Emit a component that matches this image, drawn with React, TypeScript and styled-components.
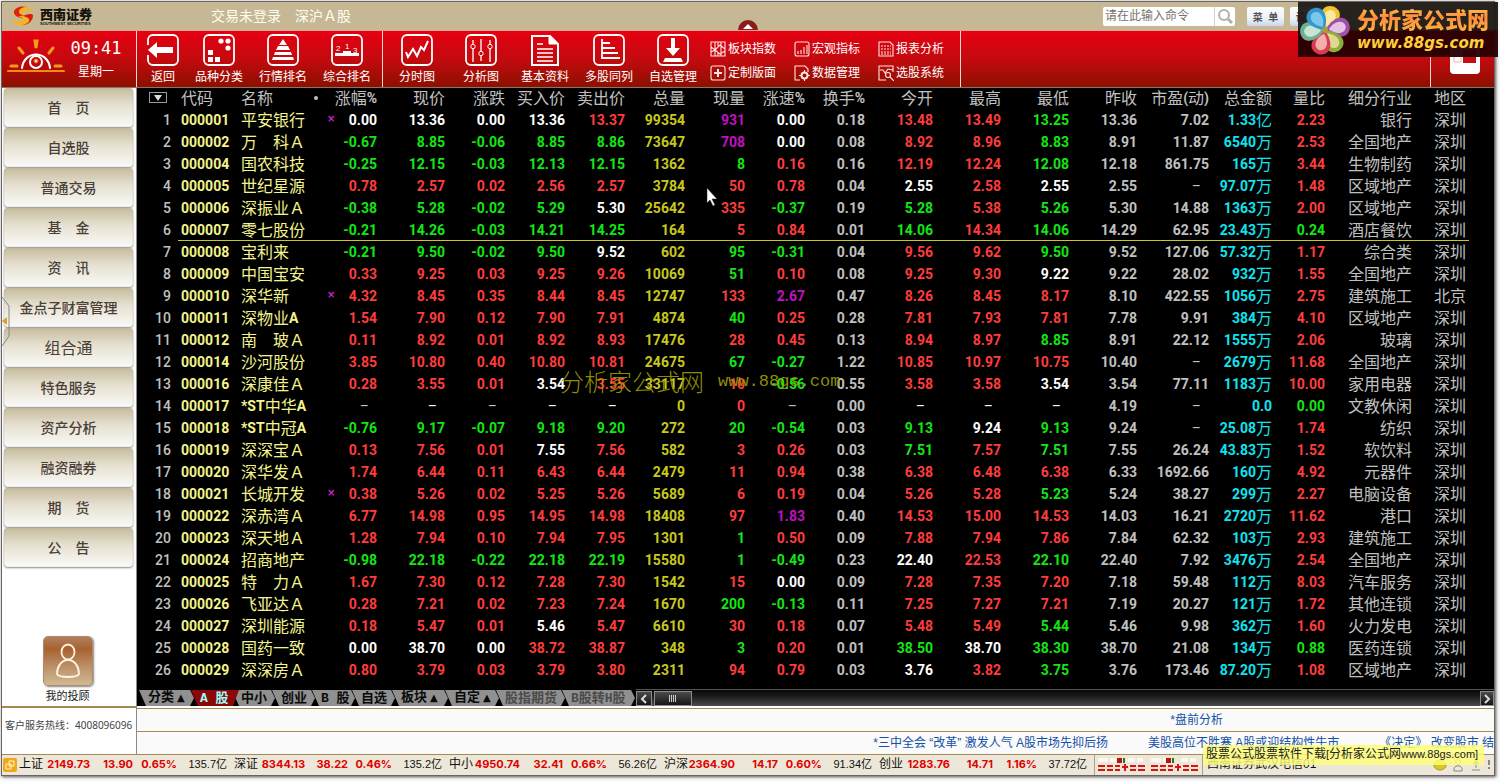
import React from 'react';
import styled, { createGlobalStyle, css } from 'styled-components';

const CJK = '"Noto Sans CJK SC"';
const GOLD = '#a58a50';

const RED = '#ff3c3c';
const GREEN = '#14e614';
const WHITE = '#ffffff';
const GRAY = '#c0c0c0';
const YELLOW = '#c8c81e';
const PURPLE = '#c010c0';
const CYAN = '#10e4f0';
const CREAM = '#f4f48c';

const GlobalStyle = createGlobalStyle`
  * { box-sizing: border-box; }
  body {
    margin: 0;
    background: #fbfbfb;
    font-family: 'Liberation Sans', ${CJK}, sans-serif;
    font-size: 12px;
  }
  button, input { font: inherit; }
  button { border: 0; padding: 0; background: none; cursor: pointer; }
`;

const Page = styled.div`
  position: relative;
  padding: 1px 5px 6px 1px;
`;

const Frame = styled.div`
  border: 1px solid #6b6460;
  box-shadow: 1px 1px 3px #555;
  background: #fff;
`;

/* ---------- title bar ---------- */

const TitleBar = styled.header`
  position: relative;
  display: flex;
  align-items: center;
  height: 28px;
  padding: 0 167px 0 10px;
  background: #c6b894;
`;

const Brand = styled.div`
  display: flex;
  align-items: center;
  gap: 6px;
  width: 199px;
`;

const BrandText = styled.div`
  display: flex;
  flex-direction: column;
  font: 900 13px/14px ${CJK}, sans-serif;
  color: #16120c;
`;

const BrandLatin = styled.span`
  font: bold 4px/5px 'Liberation Sans', sans-serif;
  white-space: nowrap;
`;

const Caption = styled.div`
  display: flex;
  gap: 14px;
  font-size: 14px;
  line-height: 20px;
  color: #fffdf0;
`;

const TitleTools = styled.div`
  display: flex;
  margin-left: auto;
  gap: 6px;
`;

const SearchBox = styled.form`
  display: flex;
  width: 132px;
  height: 19px;
  margin-right: 6px;
  background: #fff;
  border-radius: 2px;
`;

const SearchInput = styled.input`
  flex: 1;
  min-width: 0;
  border: 0;
  border-right: 1px solid #d8d2c4;
  padding: 0 2px;
  background: none;
  outline: none;
  font-size: 12px;
  &::placeholder { color: #77726a; opacity: 1; }
`;

const SearchButton = styled.button`
  display: flex;
  align-items: center;
  justify-content: center;
  width: 20px;
`;

const SmallButton = styled.button`
  width: 37px;
  height: 19px;
  border-radius: 2px;
  background: linear-gradient(#fdfdfd, #eef2f8 60%, #c9d6ea);
  color: #555;
  font-size: 10px;
  font-weight: bold;
  white-space: pre;
`;

const Collapse = styled.button`
  position: absolute;
  left: 50%;
  bottom: 0;
  height: 10px;
  line-height: 0;
  transform: translateX(-50%);
`;

/* ---------- ribbon ---------- */

const Ribbon = styled.nav`
  display: flex;
  height: 58px;
  border-top: 1px solid #e8a090;
  border-bottom: 1px solid #8c7468;
  background: linear-gradient(#e60012, #c40a0e 50%, #8c1000);
  color: #fff;
`;

const Clock = styled.div`
  display: flex;
  width: 135px;
  padding: 7px 0 0 5px;
  gap: 4px;
  border-right: 1px solid #f6d8d0;
`;

const ClockText = styled.div`
  display: flex;
  flex-direction: column;
  align-items: center;
  width: 54px;
  line-height: 20px;
`;

const Time = styled.time`
  font: 17px/20px 'DejaVu Sans Mono', monospace;
  padding-bottom: 4px;
`;

const ToolGroup = styled.div`
  display: flex;
  padding: 0 3px 0 2px;
  border-right: 1px solid #f6d8d0;
`;

const ToolButton = styled.button<{ $narrow?: boolean }>`
  display: flex;
  flex-direction: column;
  align-items: center;
  gap: 2px;
  width: ${(p) => (p.$narrow ? 48 : 64)}px;
  padding-top: 3px;
  color: #fff;
  font-size: 12px;
  line-height: 18px;
  white-space: nowrap;
`;

const MiniGrid = styled.div`
  display: grid;
  grid-template-columns: 84px 84px 79px;
  grid-template-rows: 24px 24px;
  margin: 6px 0 0 5px;
`;

const MiniButton = styled.button`
  display: flex;
  align-items: center;
  gap: 2px;
  color: #fff;
  font-size: 12px;
  line-height: 16px;
  white-space: nowrap;
`;

const RibbonEnd = styled.div`
  display: flex;
  align-items: center;
  justify-content: center;
  width: 64px;
  margin-left: auto;
  padding-left: 4px;
  border-left: 1px solid #f6d8d0;
`;

/* ---------- body ---------- */

const Body = styled.div`
  display: grid;
  grid-template-columns: 135px minmax(0, 1fr);
`;

const Sidebar = styled.aside`
  position: relative;
  display: flex;
  flex-direction: column;
  border-right: 1px solid #8a8a8a;
`;

const SideMenu = styled.nav`
  display: flex;
  flex-direction: column;
  gap: 1px;
  padding: 0 3px 0 2px;
`;

const SideButton = styled.button<{ $light?: boolean }>`
  height: 39px;
  padding-bottom: 2px;
  border-radius: 4px;
  background: linear-gradient(#c6bb9c, #e6e1d2 45%, #fbfaf7);
  box-shadow: inset 0 0 1px #999, 0 1px 2px #888;
  color: #4a4038;
  font-size: ${(p) => (p.$light ? 16 : 14)}px;
  font-weight: ${(p) => (p.$light ? 400 : 500)};
`;

const Handle = styled.button`
  position: absolute;
  left: 0;
  top: 208px;
  line-height: 0;
`;

const Advisor = styled.button`
  display: flex;
  flex-direction: column;
  align-items: center;
  margin-top: auto;
  padding: 0 3px 1px 0;
  gap: 2px;
  font-size: 11px;
  line-height: 17px;
  color: #222;
`;

const AdvisorFace = styled.span`
  display: flex;
  align-items: center;
  justify-content: center;
  width: 50px;
  height: 50px;
  border: 1px solid #b08a6c;
  border-radius: 5px;
  background: linear-gradient(#b08060, #a8622f 25%, #b88860 55%, #d0ba92);
  box-shadow: 1px 1px 2px #888;
`;

const Hotline = styled.p`
  height: 48px;
  margin: 0;
  padding: 8px 0 0 3px;
  border-top: 2px solid ${GOLD};
  font: 10px/18px 'Noto Sans', ${CJK}, sans-serif;
  color: #444;
  white-space: nowrap;
`;

const Content = styled.main`
  position: relative;
  min-width: 0;
`;

/* ---------- quote table ---------- */

const QuoteTable = styled.table`
  width: 100%;
  table-layout: fixed;
  border-collapse: collapse;
  background: #000;
  color: ${GRAY};
  font-family: ${CJK}, sans-serif;
  font-size: 16px;
  font-weight: 400;
  line-height: 20px;
`;

const Row = styled.tr<{ $marked?: boolean }>`
  height: 22px;
  ${(p) =>
    p.$marked &&
    css`
      td:not(:first-child):not(:last-child) {
        box-shadow: inset 0 -1px 0 #c8c81e;
      }
    `}
`;

const HeadRow = styled.tr`
  height: 21px;
  line-height: 18px;
`;

const cellBase = css<{ $align?: 'left' | 'right'; $color?: string }>`
  padding: 0;
  text-align: ${(p) => p.$align ?? 'right'};
  vertical-align: top;
  color: ${(p) => p.$color ?? GRAY};
  white-space: nowrap;
  font-weight: inherit;
  b {
    font: bold 14px/22px Roboto, sans-serif;
    vertical-align: top;
  }
`;

const Cell = styled.td`${cellBase}`;
const HeadCell = styled.th`
  ${cellBase}
  font-weight: 400;
  b { line-height: 20px; }
`;
const CodeHead = styled(HeadCell)` padding-left: 3px; `;
const NameHead = styled(HeadCell)` padding-left: 4px; `;

const IndexCell = styled(Cell)`
  padding-right: 7px;
  b { font-weight: 500; }
`;
const CodeCell = styled(Cell)` padding-left: 3px; `;
const NameCell = styled(Cell)` padding-left: 4px; `;
const RegionCell = styled(Cell)` padding-right: 3px; `;
const RegionHead = styled(HeadCell)` padding-right: 3px; `;

const Marker = styled.span`
  float: left;
  padding-left: 5px;
  font: bold 10px/20px 'DejaVu Sans', sans-serif;
  color: #d020d0;
`;

const SortDot = styled.span`
  float: right;
  width: 4px;
  height: 4px;
  margin: 8px 4px 0 0;
  border-radius: 2px;
  background: ${GRAY};
`;

const Dash = styled.span`
  padding-right: 8px;
  font: 14px/22px Roboto, sans-serif;
  vertical-align: top;
`;

const FilterButton = styled.button`
  display: block;
  width: 18px;
  height: 11px;
  margin: 4px 0 0 12px;
  border: 1px solid #999;
  line-height: 0;
`;

/* ---------- tab strip ---------- */

const Strip = styled.div`
  display: flex;
  padding-top: 8px;
  background: #000;
`;

const Tabs = styled.div`
  display: flex;
  padding: 1px 4px 0 2px;
`;

const Tab = styled.button<{ $width: number; $active?: boolean; $dim?: boolean }>`
  position: relative;
  z-index: ${(p) => (p.$active ? 1 : 0)};
  width: ${(p) => p.$width + (p.$active ? 7 : 3)}px;
  height: 16px;
  margin-right: ${(p) => (p.$active ? -7 : -3)}px;
  padding-left: 9px;
  text-align: left;
  background: ${(p) => (p.$active ? '#8c0808' : '#909090')};
  color: ${(p) => (p.$active ? '#9ff' : p.$dim ? '#4a4a4a' : '#0a0a0a')};
  clip-path: ${(p) =>
    p.$active
      ? 'polygon(0 0, 100% 0, calc(100% - 6px) 100%, 7px 100%)'
      : 'polygon(0 0, calc(100% - 4px) 0, 100% 50%, calc(100% - 4px) 100%, 7px 100%)'};
  font: bold 13px/15px 'Liberation Mono', ${CJK}, monospace;
  white-space: nowrap;
`;

const Up = styled.span`
  padding-left: 3px;
  font: 10px/16px 'DejaVu Sans', sans-serif;
  vertical-align: top;
`;

const ScrollTrack = styled.div`
  display: flex;
  flex: 1;
  gap: 2px;
  padding: 1px 0 0;
  border-top: 1px solid #555;
  background: linear-gradient(#080808, #1c1c1c 40%, #4c4c4c);
`;

const ScrollPiece = styled.button<{ $width: number; $end?: boolean }>`
  width: ${(p) => p.$width}px;
  height: 15px;
  margin-left: ${(p) => (p.$end ? 'auto' : 0)};
  border: 1px solid #8c8c8c;
  background: linear-gradient(#4a4a4a, #161616);
  line-height: 0;
`;

/* ---------- news ---------- */

const News = styled.section`
  padding-top: 2px;
`;

const NewsRow = styled.div<{ $inset: number }>`
  display: flex;
  justify-content: flex-end;
  gap: 40px;
  height: 23px;
  padding-right: ${(p) => p.$inset}px;
  border-top: 1px solid ${GOLD};
  background: #fafafa;
`;

const NewsLink = styled.a`
  color: #1450a8;
  font-size: 12px;
  line-height: 22px;
  text-decoration: none;
  white-space: nowrap;
`;

/* ---------- status bar ---------- */

const StatusBar = styled.footer`
  display: flex;
  height: 21px;
  border-top: 1px solid ${GOLD};
  background: #ece7d8;
  line-height: 18px;
  color: #111;
`;

const StatusIcon = styled.span`
  display: flex;
  align-items: center;
  width: 17px;
  padding-left: 1px;
`;

const Index = styled.div`
  display: grid;
  grid-template-columns: 24px 47px 43px 44px 50px;
  width: 215px;
  text-align: right;
  white-space: nowrap;
`;

const Figure = styled.span`
  font: bold 11px/18px Inter, sans-serif;
  color: #e00000;
`;

const Amount = styled.span`
  font-size: 11px;
`;

const Lamps = styled.div`
  width: 109px;
  padding: 2px 0 0 2px;
  border-left: 1px solid #a8a294;
  border-right: 1px solid #a8a294;
  line-height: 0;
`;

const Server = styled.div`
  display: flex;
  flex: 1;
  justify-content: space-between;
  padding-left: 4px;
  white-space: nowrap;
`;

const TrayIcons = styled.span`
  display: flex;
  align-items: center;
`;

/* ---------- overlays ---------- */

const SiteBadge = styled.div`
  position: absolute;
  top: 2px;
  right: 2px;
  display: flex;
  align-items: center;
  gap: 6px;
  width: 200px;
  height: 55px;
  padding-left: 1px;
  background: linear-gradient(rgba(30, 26, 22, 0.95) 48%, rgba(38, 0, 2, 0.95) 54%);
`;

const BadgeText = styled.div`
  font: 900 22px/27px ${CJK}, sans-serif;
  color: transparent;
  background: linear-gradient(#ffd24a, #ff8a3c 45%, #ffb43c);
  background-clip: text;
  white-space: nowrap;
`;

const BadgeUrl = styled.div`
  font: italic bold 15px/22px 'DejaVu Sans', sans-serif;
  color: #ffcf3a;
`;

const Watermark = styled.div`
  position: absolute;
  left: 423px;
  top: 276px;
  display: flex;
  gap: 14px;
  font: 300 24px/34px ${CJK}, sans-serif;
  color: rgba(160, 160, 0, 0.9);
  pointer-events: none;
  span { font: 17px/36px 'Liberation Mono', monospace; }
`;

const Pointer = styled.svg`
  position: absolute;
  left: 569px;
  top: 99px;
`;

const Banner = styled.div`
  position: absolute;
  right: 16px;
  bottom: 17px;
  width: 281px;
  height: 20px;
  padding-left: 3px;
  background: rgba(255, 255, 120, 0.82);
  color: #222;
  font-size: 12px;
  line-height: 18px;
  white-space: nowrap;
  span { font-size: 11px; }
`;

/* ---------- data ---------- */

// name, flagged, change %, price, change, bid, ask, volume, last lot (sign = side),
// speed, turnover, open, high, low, previous close, P/E, amount, ratio, industry, region
type Quote = [
  string, string, boolean, string, string, string, string, string, string, string,
  string, string, string, string, string, string, string, string, string, string, string
];

const parse = (line: string): Quote => {
  const [code, name, ...rest] = line.split(' ');
  const flagged = name.endsWith('!');
  return [code, name.replace('!', '').replace('_', '\u3000'), flagged, ...rest] as unknown as Quote;
};

const QUOTES: Quote[] = `000001 平安银行! 0.00 13.36 0.00 13.36 13.37 99354 *931 0.00 0.18 13.48 13.49 13.25 13.36 7.02 1.33亿 2.23 银行 深圳
000002 万_科Ａ -0.67 8.85 -0.06 8.85 8.86 73647 *708 0.00 0.08 8.92 8.96 8.83 8.91 11.87 6540万 2.53 全国地产 深圳
000004 国农科技 -0.25 12.15 -0.03 12.13 12.15 1362 -8 0.16 0.16 12.19 12.24 12.08 12.18 861.75 165万 3.44 生物制药 深圳
000005 世纪星源 0.78 2.57 0.02 2.56 2.57 3784 50 0.78 0.04 2.55 2.58 2.55 2.55 – 97.07万 1.48 区域地产 深圳
000006 深振业Ａ -0.38 5.28 -0.02 5.29 5.30 25642 335 -0.37 0.19 5.28 5.38 5.26 5.30 14.88 1363万 2.00 区域地产 深圳
000007 零七股份 -0.21 14.26 -0.03 14.21 14.25 164 5 0.84 0.01 14.06 14.34 14.06 14.29 62.95 23.43万 0.24 酒店餐饮 深圳
000008 宝利来 -0.21 9.50 -0.02 9.50 9.52 602 -95 -0.31 0.04 9.56 9.62 9.50 9.52 127.06 57.32万 1.17 综合类 深圳
000009 中国宝安 0.33 9.25 0.03 9.25 9.26 10069 -51 0.10 0.08 9.25 9.30 9.22 9.22 28.02 932万 1.55 全国地产 深圳
000010 深华新! 4.32 8.45 0.35 8.44 8.45 12747 133 2.67 0.47 8.26 8.45 8.17 8.10 422.55 1056万 2.75 建筑施工 北京
000011 深物业A 1.54 7.90 0.12 7.90 7.91 4874 -40 0.25 0.28 7.81 7.93 7.81 7.78 9.91 384万 4.10 区域地产 深圳
000012 南_玻Ａ 0.11 8.92 0.01 8.92 8.93 17476 28 0.45 0.13 8.94 8.97 8.85 8.91 22.12 1555万 2.06 玻璃 深圳
000014 沙河股份 3.85 10.80 0.40 10.80 10.81 24675 -67 -0.27 1.22 10.85 10.97 10.75 10.40 – 2679万 11.68 全国地产 深圳
000016 深康佳Ａ 0.28 3.55 0.01 3.54 3.55 33117 10 -0.56 0.55 3.58 3.58 3.54 3.54 77.11 1183万 10.00 家用电器 深圳
000017 *ST中华A – – – – – 0 0 – 0.00 – – – 4.19 – 0.0 0.00 文教休闲 深圳
000018 *ST中冠A -0.76 9.17 -0.07 9.18 9.20 272 -20 -0.54 0.03 9.13 9.24 9.13 9.24 – 25.08万 1.74 纺织 深圳
000019 深深宝Ａ 0.13 7.56 0.01 7.55 7.56 582 3 0.26 0.03 7.51 7.57 7.51 7.55 26.24 43.83万 1.52 软饮料 深圳
000020 深华发Ａ 1.74 6.44 0.11 6.43 6.44 2479 11 0.94 0.38 6.38 6.48 6.38 6.33 1692.66 160万 4.92 元器件 深圳
000021 长城开发! 0.38 5.26 0.02 5.25 5.26 5689 6 0.19 0.04 5.26 5.28 5.23 5.24 38.27 299万 2.27 电脑设备 深圳
000022 深赤湾Ａ 6.77 14.98 0.95 14.95 14.98 18408 97 1.83 0.40 14.53 15.00 14.53 14.03 16.21 2720万 11.62 港口 深圳
000023 深天地Ａ 1.28 7.94 0.10 7.94 7.95 1301 -1 0.50 0.09 7.88 7.94 7.86 7.84 62.32 103万 2.93 建筑施工 深圳
000024 招商地产 -0.98 22.18 -0.22 22.18 22.19 15580 -1 -0.49 0.23 22.40 22.53 22.10 22.40 7.92 3476万 2.54 全国地产 深圳
000025 特_力Ａ 1.67 7.30 0.12 7.28 7.30 1542 15 0.00 0.09 7.28 7.35 7.20 7.18 59.48 112万 8.03 汽车服务 深圳
000026 飞亚达Ａ 0.28 7.21 0.02 7.23 7.24 1670 -200 -0.13 0.11 7.25 7.27 7.21 7.19 20.27 121万 1.72 其他连锁 深圳
000027 深圳能源 0.18 5.47 0.01 5.46 5.47 6610 30 0.18 0.07 5.48 5.49 5.44 5.46 9.98 362万 1.60 火力发电 深圳
000028 国药一致 0.00 38.70 0.00 38.72 38.87 348 -3 0.20 0.01 38.50 38.70 38.30 38.70 21.08 134万 0.88 医药连锁 深圳
000029 深深房Ａ 0.80 3.79 0.03 3.79 3.80 2311 94 0.79 0.03 3.76 3.82 3.75 3.76 173.46 87.20万 1.08 区域地产 深圳`
  .split('\n')
  .map(parse);

const WIDTHS = [41, 59, 85, 55, 68, 60, 60, 60, 60, 60, 60, 60, 68, 68, 68, 68, 72, 63, 53, 87, 57];

const HEADS = [
  '涨幅%', '现价', '涨跌', '买入价', '卖出价', '总量', '现量', '涨速%', '换手%', '今开',
  '最高', '最低', '昨收', '市盈(动)', '总金额', '量比', '细分行业',
];

const sideOf = (value: number, base: number) =>
  value > base ? RED : value < base ? GREEN : WHITE;

const against = (value: string, base: string) =>
  value === '–' ? WHITE : sideOf(Number(value), Number(base));

const signed = (value: string) => (value === '–' ? GRAY : sideOf(Number(value), 0));

// Latin letters and figures are bold, Chinese characters are not.
const Mixed = ({ text }: { text: string }) => {
  if (text === '–') return <Dash>–</Dash>;
  return (
    <>
      {text.split(/([\x20-\x7e]+)/).map((part, i) =>
        i % 2 ? <b key={i}>{part}</b> : part
      )}
    </>
  );
};

const QuoteRow = ({ quote, index }: { quote: Quote; index: number }) => {
  const [code, name, flagged, pct, price, change, bid, ask, volume, lot, speed, turnover,
    open, high, low, prev, pe, amount, ratio, industry, region] = quote;
  const lotColor = lot[0] === '*' ? PURPLE : lot[0] === '-' ? GREEN : RED;
  const cells: [string, string][] = [
    [price, against(price, prev)],
    [change, signed(change)],
    [bid, against(bid, prev)],
    [ask, against(ask, prev)],
    [volume, YELLOW],
    [lot.replace(/[*-]/, ''), lotColor],
    [speed, Number(speed) > 1.5 ? PURPLE : signed(speed)],
    [turnover, GRAY],
    [open, against(open, prev)],
    [high, against(high, prev)],
    [low, against(low, prev)],
    [prev, GRAY],
    [pe, GRAY],
    [amount, CYAN],
    [ratio, Number(ratio) > 1 ? RED : GREEN],
    [industry, GRAY],
  ];
  return (
    <Row $marked={index === 5}>
      <IndexCell><b>{index + 1}</b></IndexCell>
      <CodeCell $align="left" $color={CREAM}><b>{code}</b></CodeCell>
      <NameCell $align="left" $color={CREAM}><Mixed text={name} /></NameCell>
      <Cell $color={signed(pct)}>
        {flagged && <Marker>×</Marker>}
        <Mixed text={pct} />
      </Cell>
      {cells.map(([text, color], i) => (
        <Cell key={i} $color={color}><Mixed text={text} /></Cell>
      ))}
      <RegionCell>{region}</RegionCell>
      <td />
    </Row>
  );
};

const Market = () => (
  <QuoteTable>
    <colgroup>
      {WIDTHS.map((w, i) => <col key={i} style={{ width: w }} />)}
      <col />
    </colgroup>
    <thead>
      <HeadRow>
        <HeadCell>
          <FilterButton aria-label="筛选">
            <svg width="8" height="6"><path d="M0 0h8L4 6z" fill="#ddd" /></svg>
          </FilterButton>
        </HeadCell>
        <CodeHead $align="left">代码</CodeHead>
        <NameHead $align="left">名称<SortDot /></NameHead>
        {HEADS.map((h) => <HeadCell key={h}><Mixed text={h} /></HeadCell>)}
        <RegionHead>地区</RegionHead>
        <td />
      </HeadRow>
    </thead>
    <tbody>
      {QUOTES.map((q, i) => <QuoteRow key={q[0]} quote={q} index={i} />)}
    </tbody>
  </QuoteTable>
);

const TABS: { label: string; width: number; menu?: boolean; active?: boolean; dim?: boolean }[] = [
  { label: '分类', width: 52, menu: true },
  { label: 'A 股', width: 41, active: true },
  { label: '中小', width: 40 },
  { label: '创业', width: 40 },
  { label: 'B 股', width: 40 },
  { label: '自选', width: 40 },
  { label: '板块', width: 53, menu: true },
  { label: '自定', width: 51, menu: true },
  { label: '股指期货', width: 66, dim: true },
  { label: 'B股转H股', width: 70, dim: true },
];

const SIDE = [
  '首\u3000页', '自选股', '普通交易', '基\u3000金', '资\u3000讯', '金点子财富管理',
  '组合通', '特色服务', '资产分析', '融资融券', '期\u3000货', '公\u3000告',
];

const INDICES = [
  ['上证', '2149.73', '13.90', '0.65%', '135.7亿'],
  ['深证', '8344.13', '38.22', '0.46%', '135.2亿'],
  ['中小', '4950.74', '32.41', '0.66%', '56.26亿'],
  ['沪深', '2364.90', '14.17', '0.60%', '91.34亿'],
  ['创业', '1283.76', '14.71', '1.16%', '37.72亿'],
];

/* ---------- drawings ---------- */

const Tile = ({ children }: { children: React.ReactNode }) => (
  <svg width="32" height="32" viewBox="0 0 32 32" fill="none" stroke="#fff">
    <rect x="1" y="1" width="30" height="30" rx="5" strokeWidth="1.8" />
    {children}
  </svg>
);

const toolIcons: Record<string, React.ReactNode> = {
  返回: (
    <Tile>
      <path d="M1 11v10" stroke="#cc0a10" strokeWidth="3" />
      <path d="M1 16l9-8v5h16v6H10v5z" fill="#fff" stroke="none" />
    </Tile>
  ),
  品种分类: (
    <Tile>
      <g fill="#fff" stroke="none">
        <circle cx="18" cy="7" r="2.6" /><circle cx="25" cy="7" r="2.6" /><circle cx="25" cy="14" r="2.6" />
        <path d="M5 16h5v5H5zM5 23h5v5H5zM12 23h5v5h-5z" />
      </g>
    </Tile>
  ),
  行情排名: (
    <Tile>
      <g fill="#fff" stroke="none">
        <path d="M16 5l4 6h-8zM11 12h10l2 4H9zM8 18h16l1 3H7zM6 23h20l1 3H5z" />
      </g>
    </Tile>
  ),
  综合排名: (
    <Tile>
      <path d="M4 19h8v-2h8v2h8v3H4z" fill="#fff" stroke="none" />
      <g fill="#fff" stroke="none" fontSize="8" fontFamily="Liberation Sans, sans-serif">
        <text x="5" y="17">2</text><text x="14" y="15">1</text><text x="22" y="19">3</text>
      </g>
    </Tile>
  ),
  分时图: (
    <Tile><path d="M5 18l2 5 5-8 4 7 4-9 3 3 4-9" strokeWidth="2" /></Tile>
  ),
  分析图: (
    <Tile>
      <path d="M8 6v4m0 5v13M16 5v12m0 5v5M25 6v4m0 5v13" strokeWidth="1.3" />
      <circle cx="8" cy="12.5" r="2.2" /><circle cx="16" cy="19.5" r="2.2" /><circle cx="25" cy="12.5" r="2.2" />
    </Tile>
  ),
  基本资料: (
    <svg width="32" height="32" viewBox="0 0 32 32" fill="none" stroke="#fff">
      <path d="M3 2h18l8 8v21H3z" strokeWidth="2" />
      <path d="M20 1v9h9z" fill="#fff" />
      <path d="M8 10h6M8 15h16M8 19h16M8 23h16M8 27h16" strokeWidth="1.3" />
    </svg>
  ),
  多股同列: (
    <Tile><path d="M9 5v19h18M9 9h8M9 14h13M9 19h16" strokeWidth="1.8" /></Tile>
  ),
  自选管理: (
    <Tile>
      <path d="M14 4h4v10h5l-7 8-7-8h5zM8 24h16l2 4H6z" fill="#fff" stroke="none" />
    </Tile>
  ),
};

const miniIcons: [string, React.ReactNode][] = [
  ['板块指数', <path d="M1 1h14v14H1zM5 1v14M11 1v14M1 6l4 3 5-5 5 4M1 11l4-2 5 4 5-3M8 1v4M8 11v4" />],
  ['宏观指标', <><rect x="1" y="1" width="14" height="14" rx="2" /><path d="M4 13v-3M7 13V9M10 13V6M13 13V4" /></>],
  ['报表分析', <><path d="M1 1h11l3 3v11H1z" /><path d="M3 5h10M3 8h10M3 11h10M3 13h10" strokeDasharray="2 1" /></>],
  ['定制版面', <><rect x="1" y="1" width="14" height="14" rx="2" /><path d="M8 4v8M4 8h8" strokeWidth="2" /></>],
  ['数据管理', <><path d="M6 15H1V1h10l3 3v3" /><circle cx="10.500" cy="10.500" r="3" strokeWidth="2" /><path d="M10.500 5v2M10.500 14v2M5 10.500h2M14 10.500h2" /></>],
  ['选股系统', <><path d="M8 15H1V1h14v6M2 5h3l2 3 3-4 5 1" /><circle cx="10" cy="10" r="2.500" /><path d="M12 12l4 4" /></>],
];

const MiniIcon = ({ children }: { children: React.ReactNode }) => (
  <svg width="16" height="16" viewBox="0 0 16 16" fill="none" stroke="#ffe4e0" strokeWidth="1.1">
    {children}
  </svg>
);

const BrandMark = () => (
  <svg width="22" height="20" viewBox="0 0 22 20">
    <path d="M1 8C2 2 9-1 15 1c4 1 6 4 6 6-3-3-8-3-10-1-1 2 2 3 5 3-5 2-11 3-15-1z" fill="#f5b324" />
    <path d="M2 5c3-5 9-5 13-4-5 0-8 2-8 5 0 4 10 3 9 6C12 13 1 12 2 5z" fill="#e02010" />
    <path d="M20 13c-2 5-9 8-14 6-4-1-5-4-5-6 3 3 8 3 10 1 1-2-2-3-5-3 5-2 12-3 14 2z" fill="#f5b324" />
    <path d="M21 9c0 7-6 10-11 10 5-1 8-3 7-6-1-2-4-2-6-3 4-2 8-3 10-1z" fill="#d81c10" />
  </svg>
);

const Sunrise = () => (
  <svg width="58" height="36" viewBox="0 0 58 36" fill="none" strokeLinecap="round">
    <path d="M28 3l1 7 1-7zM12 10l4 5M46 10l-4 5M4 28h6M48 28h6" stroke="#f59a1e" strokeWidth="3" />
    <path d="M1 33h56" stroke="#f08c14" strokeWidth="2" />
    <path d="M15 30c2-18 26-18 28 0" stroke="#fff" strokeWidth="2" />
    <circle cx="29" cy="24" r="6" stroke="#fff" strokeWidth="2" />
    <circle cx="29" cy="23" r="2" fill="#ffd9a0" stroke="#e0701c" />
  </svg>
);

const PETALS = [
  ['#f2c230', '#fbe9a0', 20], ['#a050a8', '#e4c4e4', 80], ['#8cae3c', '#e0d890', 145],
  ['#d83c50', '#f6b0ac', 195], ['#6cae98', '#c8e4d4', 265], ['#3496cc', '#7cc8ec', 325],
] as const;

const Flower = () => (
  <svg width="52" height="52" viewBox="0 0 52 52">
    {PETALS.map(([outer, inner, angle]) => (
      <g key={angle} transform={`rotate(${angle} 26 26)`}>
        <path d="M26 25C14 17 13 2 26 1c13 1 12 16 0 24z" fill={outer} />
        <path d="M26 22C19 16 18 6 26 5c8 1 7 11 0 17z" fill={inner} />
      </g>
    ))}
    <circle cx="26" cy="26" r="3" fill="#a89848" />
  </svg>
);

const LampRow = ({ x, green }: { x: number; green: number }) => (
  <g transform={`translate(${x} 0)`}>
    <path d="M0 1h10v4H0zM12 1h6v4h-6zM30 1h7v4h-7zM39 1h6v4h-6z" fill="#fff" opacity=".7" />
    <path d={`M${green - 6} 1h5v5h-5z`} fill="#c01010" />
    <path d={`M${green} 1h2v5h-2z`} fill="#108020" />
    <path d="M0 8h7v2H0zM9 8h6v2H9zM17 8h5v2h-5zM32 8h6v2h-6zM40 8h7v2h-7zM0 12h7v2H0zM9 12h6v2H9zM17 12h5v2h-5zM32 12h6v2h-6zM40 12h7v2h-7zM24 9h6v2h-6zM26 7h2v7h-2z" fill="#e01010" />
  </g>
);

const App = () => (
  <Page>
    <GlobalStyle />
    <Frame>
      <TitleBar>
        <Brand>
          <BrandMark />
          <BrandText>
            西南证券
            <BrandLatin>SOUTHWEST SECURITIES</BrandLatin>
          </BrandText>
        </Brand>
        <Caption><span>交易未登录</span><span>深沪Ａ股</span></Caption>
        <TitleTools>
          <SearchBox>
            <SearchInput aria-label="命令" placeholder="请在此输入命令" />
            <SearchButton type="button" aria-label="搜索">
              <svg width="16" height="16" fill="none" stroke="#b4b0a6" strokeWidth="2">
                <circle cx="7" cy="7" r="5" /><path d="M11 11l4 4" strokeWidth="3" />
              </svg>
            </SearchButton>
          </SearchBox>
          <SmallButton>菜  单</SmallButton>
          <SmallButton>设  置</SmallButton>
        </TitleTools>
        <Collapse aria-label="收起工具栏">
          <svg width="20" height="10"><circle cx="10" cy="10" r="10" fill="#8c1c1c" /><path d="M5 9l5-5 5 5z" fill="#fff" /></svg>
        </Collapse>
      </TitleBar>

      <Ribbon>
        <Clock>
          <Sunrise />
          <ClockText>
            <Time>09:41</Time>
            星期一
          </ClockText>
        </Clock>
        <ToolGroup>
          {['返回', '品种分类', '行情排名', '综合排名'].map((t) => (
            <ToolButton key={t} $narrow={t === '返回'}>{toolIcons[t]}{t}</ToolButton>
          ))}
        </ToolGroup>
        <ToolGroup>
          {['分时图', '分析图', '基本资料', '多股同列', '自选管理'].map((t) => (
            <ToolButton key={t}>{toolIcons[t]}{t}</ToolButton>
          ))}
          <MiniGrid>
            {miniIcons.map(([t, icon]) => (
              <MiniButton key={t}><MiniIcon>{icon}</MiniIcon>{t}</MiniButton>
            ))}
          </MiniGrid>
        </ToolGroup>
        <RibbonEnd>
          <svg width="30" height="30"><rect width="30" height="30" rx="4" fill="#fff" /><path d="M13 6h13v13H13z" fill="#c80c10" /><path d="M4 6h7v12H4z" fill="none" stroke="#e8b0a8" /></svg>
        </RibbonEnd>
      </Ribbon>

      <Body>
        <Sidebar>
          <SideMenu>
            {SIDE.map((s) => <SideButton key={s} $light={s === '组合通'}>{s}</SideButton>)}
          </SideMenu>
          <Handle aria-label="折叠侧栏">
            <svg width="9" height="52" fill="none" stroke="#888">
              <path d="M0 1l7 9v30l-7 10" /><path d="M0 25l5-4v8z" fill="#d8a020" stroke="none" />
            </svg>
          </Handle>
          <Advisor>
            <AdvisorFace>
              <svg width="26" height="36" fill="none" stroke="#fff3e0" strokeWidth="1.800">
                <ellipse cx="13" cy="9" rx="6.500" ry="7.500" />
                <path d="M13 17c7 0 11 7 11 14-2 4-20 4-22 0 0-7 4-14 11-14z" />
              </svg>
            </AdvisorFace>
            我的投顾
          </Advisor>
          <Hotline>客户服务热线：4008096096</Hotline>
        </Sidebar>

        <Content>
          <Market />
          <Strip>
            <Tabs>
              {TABS.map((t) => (
                <Tab key={t.label} $width={t.width} $active={t.active} $dim={t.dim}>
                  {t.label}{t.menu && <Up>▲</Up>}
                </Tab>
              ))}
            </Tabs>
            <ScrollTrack>
              <ScrollPiece $width={16} aria-label="向左滚动">
                <svg width="8" height="10" fill="none" stroke="#ddd" strokeWidth="2"><path d="M6 1L2 5l4 4" /></svg>
              </ScrollPiece>
              <ScrollPiece $width={38} aria-label="滚动条">
                <svg width="8" height="7" stroke="#ccc"><path d="M.5 0v7M2.500 0v7M4.500 0v7M6.500 0v7" /></svg>
              </ScrollPiece>
              <ScrollPiece $width={14} $end aria-label="向右滚动">
                <svg width="8" height="10" fill="none" stroke="#ddd" strokeWidth="2"><path d="M2 1l4 4-4 4" /></svg>
              </ScrollPiece>
            </ScrollTrack>
          </Strip>
          <News>
            <NewsRow $inset={271}><NewsLink href="#">*盘前分析</NewsLink></NewsRow>
            <NewsRow $inset={0}>
              <NewsLink href="#">*三中全会 “改革” 激发人气 A股市场先抑后扬</NewsLink>
              <NewsLink href="#">美股高位不胜寒 A股或迎结构性牛市</NewsLink>
              <NewsLink href="#">《决定》 改变股市 结</NewsLink>
            </NewsRow>
          </News>
          <Watermark>分析家公式网<span>www.88gs.com</span></Watermark>
          <Pointer width="12" height="20" viewBox="0 0 12 20">
            <path d="M1 1v15l3-3 3 6 2-1-3-6h5z" fill="#fff" stroke="#222" strokeWidth=".5" />
          </Pointer>
        </Content>
      </Body>

      <StatusBar>
        <StatusIcon>
          <svg width="14" height="14"><rect width="14" height="14" rx="2" fill="#f0a818" /><path d="M6 3h5v5H6zM3 6h5v5H3z" fill="none" stroke="#fff4c8" /></svg>
        </StatusIcon>
        {INDICES.map(([name, value, change, pct, amount]) => (
          <Index key={name}>
            {name}
            <Figure>{value}</Figure>
            <Figure>{change}</Figure>
            <Figure>{pct}</Figure>
            <Amount>{amount}</Amount>
          </Index>
        ))}
        <Lamps>
          <svg width="104" height="16"><LampRow x={1} green={25} /><LampRow x={54} green={21} /></svg>
        </Lamps>
        <Server>
          西南证券武汉电信01
          <TrayIcons>
            <svg width="62" height="16" fill="none" stroke="#888">
              <ellipse cx="8" cy="8" rx="6" ry="5" fill="#d8c828" stroke="#a89818" />
              <circle cx="26" cy="5" r="2.500" /><path d="M22 14v-3l2-2h4l2 2v3z" />
              <path d="M40 13h8M44 11V5M41 7l3-4 3 4z" fill="#888" /><path d="M57 3v5M57 10v2" strokeWidth="2" />
            </svg>
          </TrayIcons>
        </Server>
      </StatusBar>
    </Frame>

    <SiteBadge>
      <Flower />
      <div>
        <BadgeText>分析家公式网</BadgeText>
        <BadgeUrl>www.88gs.com</BadgeUrl>
      </div>
    </SiteBadge>
    <Banner>股票公式股票软件下载<span>[</span>分析家公式网<span>www.88gs.com]</span></Banner>
  </Page>
);

export default App;
